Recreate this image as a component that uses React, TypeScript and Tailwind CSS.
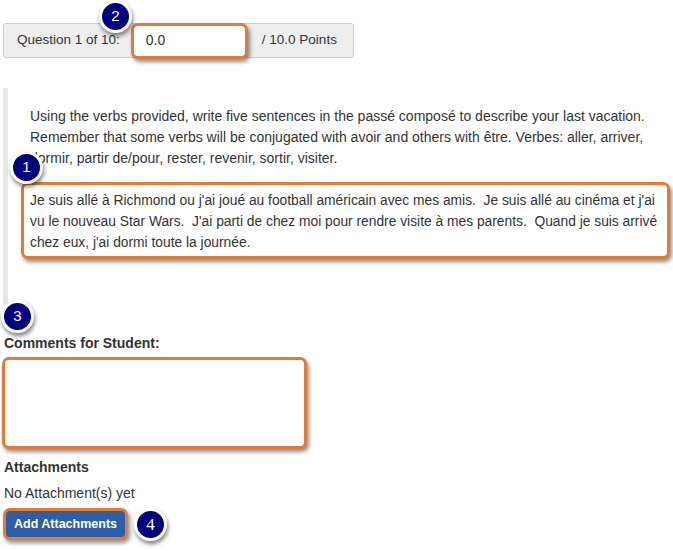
import React from "react"

const orange = "border-[3px] border-[#de7c3b] rounded-[7px] shadow-[2px_3px_4px_rgba(0,0,0,0.45)]"

function Badge({ n, className, serif }: { n: string; className: string; serif?: boolean }) {
  return (
    <div
      className={`absolute z-10 flex h-[33px] w-[33px] items-center justify-center rounded-full border-[3px] border-white bg-[#020281] text-[15px] text-white shadow-[1px_3px_4px_rgba(0,0,0,0.5)] ${className}`}
      style={serif ? { fontFamily: '"Liberation Serif", serif', fontSize: 17 } : undefined}
    >
      {n}
    </div>
  )
}

export default function App() {
  return (
    <div className="relative h-[551px] w-[673px] overflow-hidden bg-white text-[14px] text-[#333] [font-family:'Liberation_Sans',Arial,sans-serif]">
      {/* score row */}
      <div className="ml-[3px] mt-[23px] flex h-[35px] w-[351px] items-center rounded-[3px] border border-[#cfcfcf] bg-[#eeeeee] text-[13.5px]">
        <span className="pl-[13px] pr-[11px]">Question 1 of 10:</span>
        <div className={`flex h-[36px] w-[117px] items-center bg-white pl-[12px] text-[14px] ${orange}`}>0.0</div>
        <span className="ml-[14px]">/ 10.0 Points</span>
      </div>

      {/* question + answer */}
      <div className="ml-[3px] mt-[30px] h-[217px] border-l-[5px] border-[#e6e6e6] pt-[18px]">
        <p className="whitespace-nowrap pl-[22px] leading-[21px]">
          Using the verbs provided, write five sentences in the passé composé to describe your last vacation.
          <br />
          Remember that some verbs will be conjugated with avoir and others with être. Verbes: aller, arriver,
          <br />
          dormir, partir de/pour, rester, revenir, sortir, visiter.
        </p>
        <div className={`ml-[13px] mt-[13px] h-[77px] w-[649px] overflow-hidden whitespace-nowrap bg-white px-[6px] pt-[5px] text-[13.8px] leading-[21px] ${orange}`}>
          Je suis allé à Richmond ou j'ai joué au football américain avec mes amis.&nbsp; Je suis allé au cinéma et j'ai
          <br />
          vu le nouveau Star Wars.&nbsp; J'ai parti de chez moi pour rendre visite à mes parents.&nbsp; Quand je suis arrivé
          <br />
          chez eux, j'ai dormi toute la journée.
        </div>
      </div>

      {/* comments */}
      <div className="ml-[4px] mt-[28px] font-bold leading-[20px]">Comments for Student:</div>
      <div className={`ml-[2px] mt-[4px] h-[92px] w-[305px] bg-white ${orange}`} />

      <div className="ml-[4px] mt-[8px] font-bold leading-[20px]">Attachments</div>
      <div className="ml-[4px] mt-[6px] leading-[20px]">No Attachment(s) yet</div>
      <div className={`ml-[3px] mt-[5px] flex h-[32px] w-[125px] items-center justify-center bg-[#2e5fa6] text-[12.5px] font-bold text-white ${orange}`}>
        Add Attachments
      </div>

      <Badge n="2" className="left-[99px] top-[0px]" />
      <Badge n="1" className="left-[10px] top-[151px]" />
      <Badge n="3" className="left-[1px] top-[300px]" />
      <Badge n="4" className="left-[134px] top-[508px]" serif />
    </div>
  )
}
